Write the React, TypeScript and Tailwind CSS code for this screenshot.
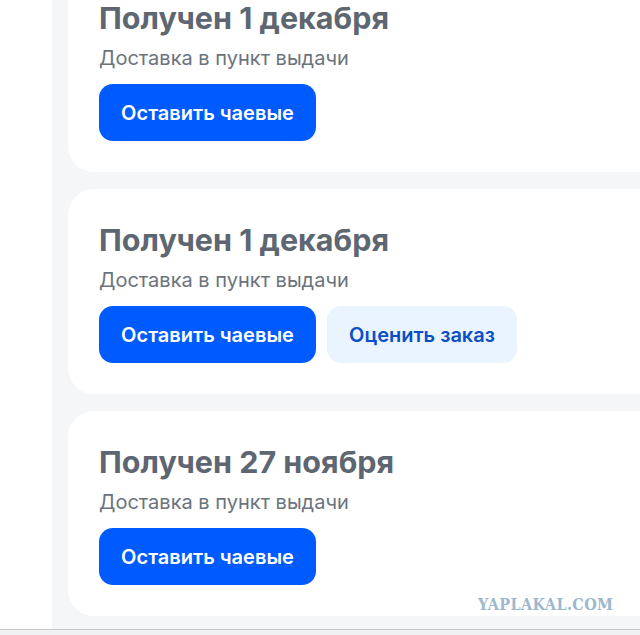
import React from "react";

function Card({ title, rate, className = "" }: { title: string; rate?: boolean; className?: string }) {
  return (
    <div className={"ml-4 h-[205px] w-[620px] shrink-0 rounded-l-[26px] bg-white pl-[31px] pt-[33px] " + className}>
      <div className="text-[30.5px] font-bold leading-[36px] text-[#5d6671]" style={{ fontFamily: "Inter, 'Noto Sans', sans-serif" }}>
        {title}
      </div>
      <div className="mt-[8px] text-[20px] leading-[28px] text-[#6b737d]" style={{ fontFamily: "Inter, 'Noto Sans', sans-serif" }}>
        Доставка в пункт выдачи
      </div>
      <div className="mt-[12px] flex gap-[11px]" style={{ fontFamily: "Inter, 'Noto Sans', sans-serif" }}>
        <div className="flex h-[57px] w-[217px] items-center justify-center rounded-[14px] bg-[#005bff] text-[20px] font-semibold text-white">
          Оставить чаевые
        </div>
        {rate && (
          <div className="flex h-[57px] w-[190px] items-center justify-center rounded-[14px] bg-[#e9f4fe] text-[20px] font-semibold text-[#0b4fc7]">
            Оценить заказ
          </div>
        )}
      </div>
    </div>
  );
}

export default function App() {
  return (
    <div className="relative flex h-[635px] w-[640px] flex-col overflow-hidden bg-white">
      <div className="ml-[52px] flex flex-1 flex-col gap-[17px] overflow-hidden bg-[#f5f6f8]">
        <Card title="Получен 1 декабря" className="-mt-[33px]" />
        <Card title="Получен 1 декабря" rate />
        <Card title="Получен 27 ноября" />
      </div>
      <div className="h-[6px] border-t border-[#c6c7c9] bg-[#f0f1f3]" />
      <div
        className="absolute left-[478px] top-[593px] text-[16px] font-bold tracking-[0.4px] text-[#9db7cd]"
        style={{ fontFamily: "'DejaVu Serif', serif", fontStretch: "condensed" }}
      >
        YAPLAKAL.COM
      </div>
    </div>
  );
}
